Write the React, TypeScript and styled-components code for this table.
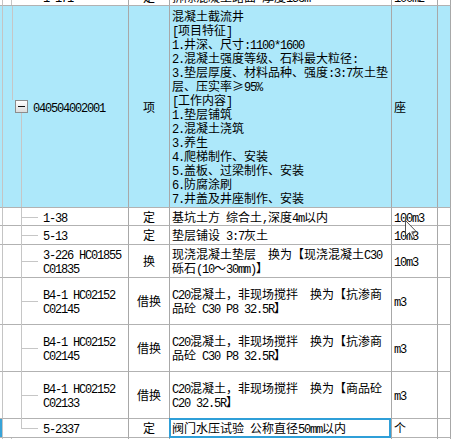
import React from "react";
import styled, { createGlobalStyle, css } from "styled-components";

const Global = createGlobalStyle`
  html, body { margin: 0; padding: 0; background: #fff; }
  body {
    font-family: "Noto Sans CJK SC", "Liberation Sans", sans-serif;
    font-size: 12px;
    color: #000;
  }
`;

const Viewport = styled.div`
  position: relative;
  width: 451px;
  height: 439px;
  overflow: hidden;
  background: #fff;
`;

const Table = styled.div`
  display: flex;
  flex-direction: column;
  margin-top: -12px;
`;

const Row = styled.div<{ $h: number; $active?: boolean }>`
  display: grid;
  grid-template-columns: 3px 126px 41px 222px 46px 1fr;
  height: ${(p) => p.$h}px;
  background: ${(p) => (p.$active ? "#ade8fa" : "#fff")};
`;

const Cell = styled.div<{ $center?: boolean; $pad?: number }>`
  position: relative;
  box-sizing: border-box;
  border-right: 1px solid #a8a8a8;
  border-bottom: 1px solid #b2b2b2;
  display: flex;
  flex-direction: column;
  justify-content: center;
  align-items: ${(p) => (p.$center ? "center" : "flex-start")};
  padding-left: ${(p) => p.$pad ?? 0}px;
  line-height: 14px;
  white-space: pre;
  min-width: 0;
`;

const Indicator = styled(Cell)<{ $current?: boolean }>`
  border-right-color: #c4c4c4;
  background: ${(p) => (p.$current ? "#37a3d8" : "transparent")};
`;

type TreeKind = "top" | "parent" | "child" | "last";

const treeLine = "#c6c6c6";

const TreeCell = styled(Cell)<{ $tree: TreeKind }>`
  flex-direction: row;
  align-items: center;
  justify-content: flex-start;
  &::before,
  &::after {
    content: "";
    position: absolute;
    background: ${treeLine};
  }
  ${(p) =>
    p.$tree === "top" &&
    css`
      &::before { left: 8px; top: 0; bottom: 0; width: 1px; }
      &::after { display: none; }
    `}
  ${(p) =>
    p.$tree === "parent" &&
    css`
      &::before { left: 9px; top: 0; height: calc(50% - 7px); width: 1px; }
      &::after { left: 18px; top: calc(50% + 6px); bottom: 0; width: 1px; }
    `}
  ${(p) =>
    p.$tree === "child" &&
    css`
      &::before { left: 18px; top: 0; bottom: -1px; width: 1px; }
      &::after { left: 18px; top: 50%; width: 17px; height: 1px; }
    `}
  ${(p) =>
    p.$tree === "last" &&
    css`
      &::before { left: 18px; top: 0; height: 50%; width: 1px; }
      &::after { left: 18px; top: 50%; width: 17px; height: 1px; }
    `}
`;

const CodeLines = styled.div<{ $indent: number }>`
  display: flex;
  flex-direction: column;
  margin-left: ${(p) => p.$indent}px;
`;

const Latin = styled.span`
  font-family: "Liberation Mono", "DejaVu Sans Mono", monospace;
  letter-spacing: -1.2px;
`;

const Line = styled.div`
  height: 14px;
  white-space: pre;
`;

const Toggle = styled.div`
  box-sizing: border-box;
  width: 13px;
  height: 13px;
  margin-left: 12px;
  border: 1px solid #8c8c8c;
  background: linear-gradient(#ffffff, #dcdcdc);
  display: flex;
  align-items: center;
  justify-content: center;
  &::before {
    content: "";
    width: 7px;
    height: 1px;
    background: #111;
  }
`;

const Selection = styled.div`
  position: absolute;
  left: -1px;
  top: -1px;
  right: 0;
  bottom: -1px;
  border: 2px solid #2f9fd8;
  pointer-events: none;
`;

const Cursor = styled.svg`
  position: absolute;
  left: 405px;
  top: 220px;
  opacity: 0.85;
`;

function Mixed({ text }: { text: string }) {
  const parts = text.split(/([\x20-\x7E]+)/).filter((s) => s.length > 0);
  return (
    <>
      {parts.map((p, i) =>
        /^[\x20-\x7E]+$/.test(p) ? (
          <Latin key={i}>{p}</Latin>
        ) : (
          <React.Fragment key={i}>{p}</React.Fragment>
        )
      )}
    </>
  );
}

function Lines({ lines }: { lines: string[] }) {
  return (
    <>
      {lines.map((l, i) => (
        <Line key={i}>
          <Mixed text={l} />
        </Line>
      ))}
    </>
  );
}

type Item = {
  h: number;
  tree: TreeKind;
  code: string[];
  type: string;
  desc: string[];
  unit: string;
  active?: boolean;
  current?: boolean;
};

const items: Item[] = [
  {
    h: 18,
    tree: "top",
    code: ["1-171"],
    type: "定",
    desc: ["拆除混凝土路面 厚度15cm"],
    unit: "100m2",
  },
  {
    h: 202,
    tree: "parent",
    code: ["040504002001"],
    type: "项",
    desc: [
      "混凝土截流井",
      "[项目特征]",
      "1.井深、尺寸:1100*1600",
      "2.混凝土强度等级、石料最大粒径:",
      "3.垫层厚度、材料品种、强度:3:7灰土垫",
      "层、压实率≥95%",
      "[工作内容]",
      "1.垫层铺筑",
      "2.混凝土浇筑",
      "3.养生",
      "4.爬梯制作、安装",
      "5.盖板、过梁制作、安装",
      "6.防腐涂刷",
      "7.井盖及井座制作、安装",
    ],
    unit: "座",
    active: true,
  },
  {
    h: 18,
    tree: "child",
    code: ["1-38"],
    type: "定",
    desc: ["基坑土方 综合土,深度4m以内"],
    unit: "100m3",
  },
  {
    h: 19,
    tree: "child",
    code: ["5-13"],
    type: "定",
    desc: ["垫层铺设 3:7灰土"],
    unit: "10m3",
  },
  {
    h: 33,
    tree: "child",
    code: ["3-226 HC01855", "C01835"],
    type: "换",
    desc: ["现浇混凝土垫层  换为【现浇混凝土C30", "砾石(10～30mm)】"],
    unit: "10m3",
  },
  {
    h: 47,
    tree: "child",
    code: ["B4-1 HC02152", "C02145"],
    type: "借换",
    desc: ["C20混凝土，非现场搅拌  换为【抗渗商", "品砼 C30 P8 32.5R】"],
    unit: "m3",
  },
  {
    h: 47,
    tree: "child",
    code: ["B4-1 HC02152", "C02145"],
    type: "借换",
    desc: ["C20混凝土，非现场搅拌  换为【抗渗商", "品砼 C30 P8 32.5R】"],
    unit: "m3",
  },
  {
    h: 47,
    tree: "child",
    code: ["B4-1 HC02152", "C02133"],
    type: "借换",
    desc: ["C20混凝土，非现场搅拌  换为【商品砼", "C20 32.5R】"],
    unit: "m3",
  },
  {
    h: 19,
    tree: "last",
    code: ["5-2337"],
    type: "定",
    desc: ["阀门水压试验 公称直径50mm以内"],
    unit: "个",
    current: true,
  },
];

export default function App() {
  return (
    <>
      <Global />
      <Viewport>
        <Table>
          {items.map((it, i) => (
            <Row key={i} $h={it.h} $active={it.active}>
              <Indicator $current={it.current} />
              <TreeCell $tree={it.tree}>
                {it.tree === "parent" && <Toggle />}
                <CodeLines $indent={it.tree === "parent" ? 5 : 40}>
                  {it.code.map((c, j) => (
                    <Line key={j}>
                      <Latin>{c}</Latin>
                    </Line>
                  ))}
                </CodeLines>
              </TreeCell>
              <Cell $center>{it.type}</Cell>
              <Cell $pad={2}>
                <Lines lines={it.desc} />
                {it.current && <Selection />}
              </Cell>
              <Cell $pad={2}>
                <Line>
                  <Mixed text={it.unit} />
                </Line>
              </Cell>
              <Cell />
            </Row>
          ))}
          <Row $h={20}>
            <Indicator />
            <TreeCell $tree="top" />
            <Cell />
            <Cell />
            <Cell />
            <Cell />
          </Row>
        </Table>
        <Cursor width="13" height="20" viewBox="0 0 13 20">
          <path
            d="M0.5 0.5 L0.5 16.5 L4.5 12.5 L7.3 18.5 L9.5 17.5 L6.8 11.8 L11.5 11.8 Z"
            fill="#fff"
            stroke="#3a3a3a"
            strokeWidth="1"
          />
        </Cursor>
      </Viewport>
    </>
  );
}
